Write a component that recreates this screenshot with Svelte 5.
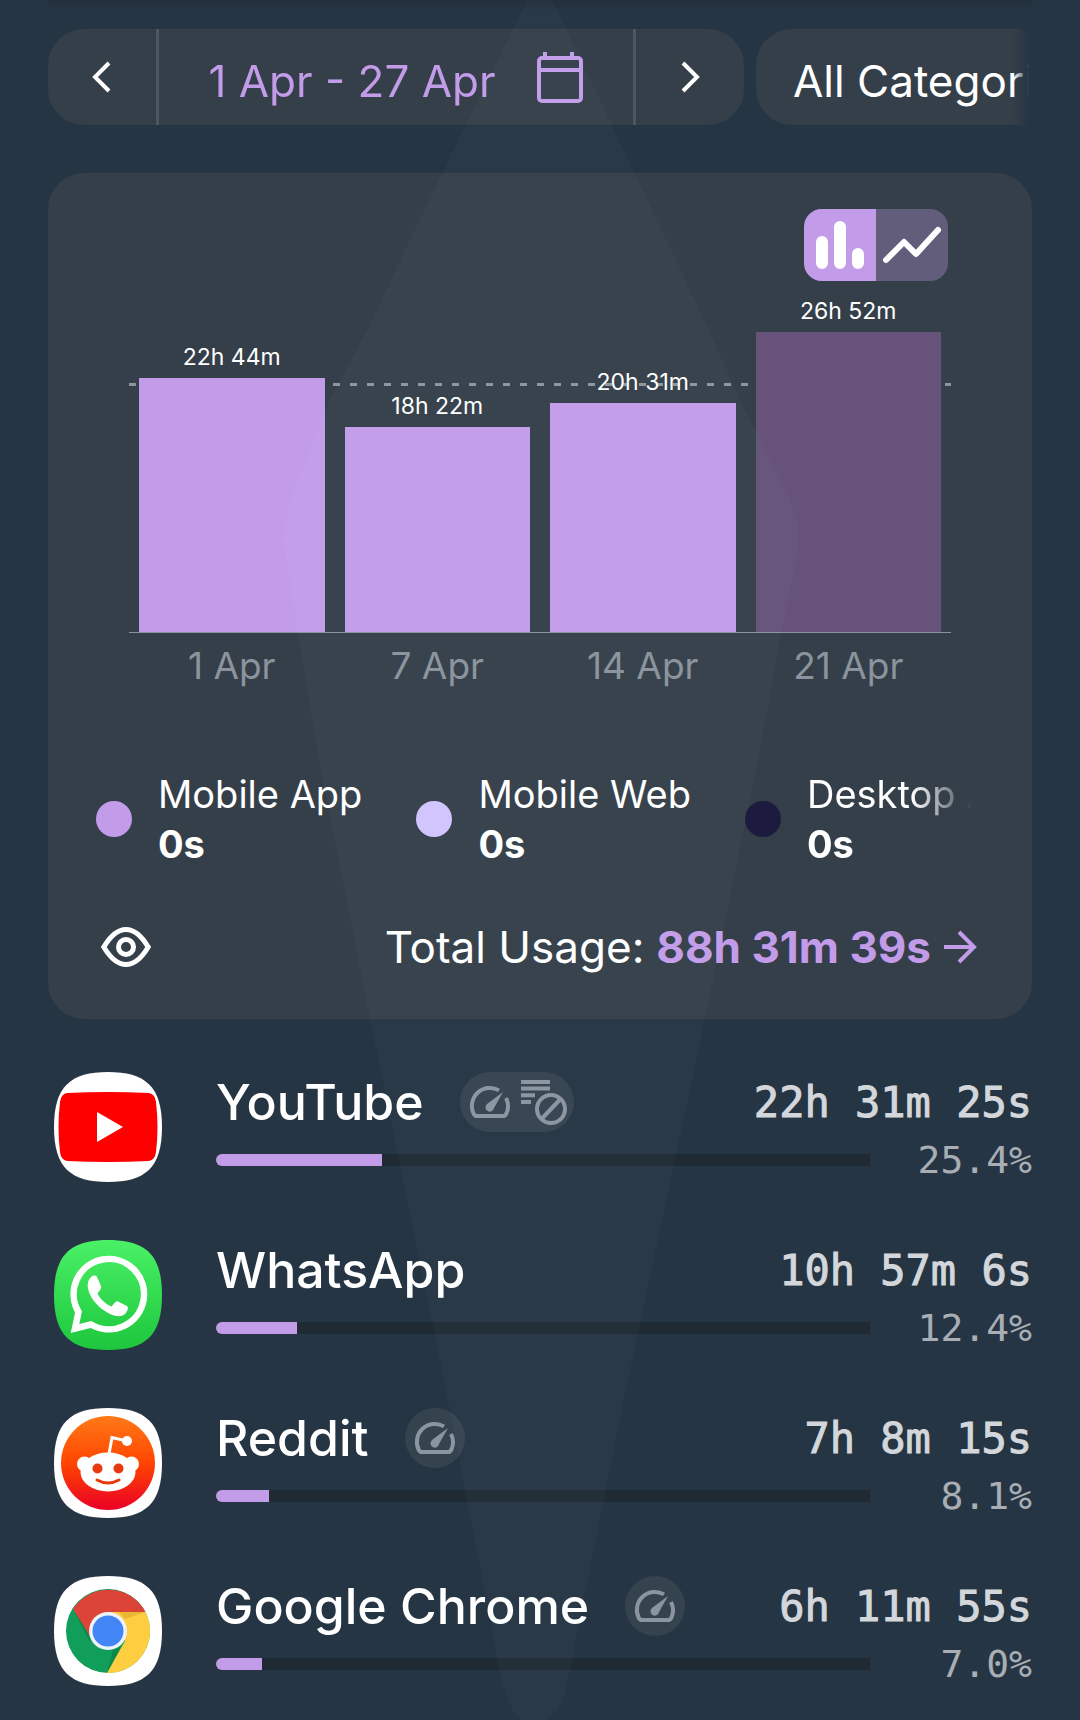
<script>
  const days = [
    { label: '1 Apr', text: '22h 44m', minutes: 1364 },
    { label: '7 Apr', text: '18h 22m', minutes: 1102 },
    { label: '14 Apr', text: '20h 31m', minutes: 1231 },
    { label: '21 Apr', text: '26h 52m', minutes: 1612, current: true }
  ];
  const peak = Math.max(...days.map((d) => d.minutes));
  const average = days.reduce((sum, d) => sum + d.minutes, 0) / days.length;

  const sources = [
    { name: 'Mobile App', value: '0s', tone: 'app' },
    { name: 'Mobile Web', value: '0s', tone: 'web' },
    { name: 'Desktop App', value: '0s', tone: 'desktop' }
  ];

  const apps = [
    { id: 'youtube', name: 'YouTube', time: '22h 31m 25s', percent: '25.4', limit: true, blocked: true },
    { id: 'whatsapp', name: 'WhatsApp', time: '10h 57m 6s', percent: '12.4' },
    { id: 'reddit', name: 'Reddit', time: '7h 8m 15s', percent: '8.1', limit: true },
    { id: 'chrome', name: 'Google Chrome', time: '6h 11m 55s', percent: '7.0', limit: true }
  ];

  let mode = $state('bars');
</script>

{#snippet squircle(fill)}
  <path {fill} d="M55 0C92 0 109 14 109 55S92 110 55 110 1 96 1 55 18 0 55 0Z" />
{/snippet}

<main class="page">
  <div class="top-shade"></div>
  <svg class="kite" viewBox="0 0 1080 1720" preserveAspectRatio="none" aria-hidden="true">
    <path d="M527 0H552L638 180 709 330 740 400 790 500Q803 530 796 560L780 640 760 750 705 1019 628 1380 566 1690Q556 1718 545 1720H522Q510 1712 502 1683L444 1380 370 1019 317 750 299 640 286 560Q281 530 290 500L330 400 367 330 439 180Z" />
  </svg>

  <nav class="filters" aria-label="Filters">
    <div class="range">
      <button class="step" aria-label="Previous period">
        <svg width="20" height="32" viewBox="0 0 20 32"><path d="M17 2 3 16l14 14" /></svg>
      </button>
      <button class="dates">
        <span class="pill-text">1 Apr - 27 Apr</span>
        <svg width="48" height="52" viewBox="0 0 48 52" aria-hidden="true">
          <rect x="3" y="7" width="42" height="43" rx="3" />
          <path d="M3 19h42M9 1v6M36 1v6" />
        </svg>
      </button>
      <button class="step" aria-label="Next period">
        <svg width="20" height="32" viewBox="0 0 20 32"><path d="m3 2 14 14L3 30" /></svg>
      </button>
    </div>
    <button class="category"><span class="pill-text">All Categories</span></button>
  </nav>

  <section class="card">
    <div class="toggle">
      <button class:on={mode === 'bars'} aria-label="Bar chart" onclick={() => (mode = 'bars')}>
        <svg width="72" height="72" viewBox="0 0 72 72"><path stroke-width="12" d="M18 33v21M36 18v36M54 45v9" /></svg>
      </button>
      <button class:on={mode === 'line'} aria-label="Line chart" onclick={() => (mode = 'line')}>
        <svg width="72" height="72" viewBox="0 0 72 72"><path stroke-width="6" stroke-linejoin="round" d="M10 51 28 33 40 45 62 21" /></svg>
      </button>
    </div>

    <div class="chart">
      <div class="plot">
        <div class="average" style:bottom="{(average / peak) * 100}%"></div>
        {#each days as day}
          <div class="column">
            <span class="amount">{day.text}</span>
            <div class="bar" class:current={day.current} style:height="{(day.minutes / peak) * 100}%"></div>
          </div>
        {/each}
      </div>
      <div class="axis">
        {#each days as day}<span>{day.label}</span>{/each}
      </div>
    </div>

    <ul class="legend">
      {#each sources as source}
        <li>
          <span class="dot {source.tone}"></span>
          <div>
            <div class="source">{source.name}</div>
            <strong>{source.value}</strong>
          </div>
        </li>
      {/each}
    </ul>

    <footer>
      <button class="eye" aria-label="Show or hide usage">
        <svg width="50" height="40" viewBox="0 0 50 40">
          <path d="M2.8 20C10 8 17 2.5 25 2.5S40 8 47.2 20C40 32 33 37.5 25 37.5S10 32 2.8 20Z" />
          <circle cx="25" cy="20" r="7.5" />
        </svg>
      </button>
      <a class="total" href="#total">
        <span>Total Usage:</span>
        <strong>88h 31m 39s</strong>
        <svg width="34" height="34" viewBox="0 0 34 34" aria-hidden="true"><path d="M1 17h30M16 2l15 15-15 15" /></svg>
      </a>
    </footer>
  </section>

  <ul class="apps">
    {#each apps as app}
      <li>
        <svg class="logo" width="110" height="110" viewBox="0 0 110 110" aria-hidden="true">
          {#if app.id === 'youtube'}
            {@render squircle('#fff')}
            <path fill="#f00" d="M14 21Q55 19 96 21 102 22 103 30 106 55 103 80 102 88 96 89 55 91 14 89 8 88 7 80 4 55 7 30 8 22 14 21Z" />
            <path fill="#fff" d="M44 40 70 55 44 70Z" />
          {:else if app.id === 'whatsapp'}
            <defs>
              <linearGradient id="wa" x2="0" y2="1"><stop stop-color="#4af167" /><stop offset="1" stop-color="#1dc63c" /></linearGradient>
            </defs>
            {@render squircle('url(#wa)')}
            <path fill="none" stroke="#fff" stroke-width="6.500" d="M22 88.500 25.500 72A35.200 35.200 0 1 1 38 84.500Z" />
            <path fill="#fff" d="M38 37c2-2 5-2 6 0l4 9c1 2-1 4-3.500 7.500 3 6 8 10.500 14 13 3-3.500 4.500-6 6.500-5l9 4.500c2 2 0 6-2 8-4 3-9 3-16-.5C46 68 38 60 35 49c-1-5 0-9 3-12Z" />
          {:else if app.id === 'reddit'}
            <defs>
              <linearGradient id="rd" x2="0" y2="1"><stop stop-color="#ff7a18" /><stop offset=".5" stop-color="#ff4500" /><stop offset="1" stop-color="#ea0027" /></linearGradient>
            </defs>
            {@render squircle('#fff')}
            <circle cx="55" cy="55" r="47" fill="url(#rd)" />
            <path fill="none" stroke="#fff" stroke-width="3" d="M56 46 59 29.500 74 33" />
            <circle cx="74" cy="33" r="5" fill="#fff" />
            <circle cx="31.500" cy="56" r="7.500" fill="#fff" />
            <circle cx="78.500" cy="56" r="7.500" fill="#fff" />
            <ellipse cx="55" cy="64" rx="27.500" ry="19.500" fill="#fff" />
            <circle cx="44.500" cy="60.500" r="5" fill="#e8380d" />
            <circle cx="65.500" cy="60.500" r="5" fill="#e8380d" />
            <path fill="none" stroke="#e8380d" stroke-width="3" stroke-linecap="round" d="M44 72q11 6 22 0" />
          {:else}
            {@render squircle('#fff')}
            <circle cx="55" cy="55" r="42" fill="#119e5a" />
            <path fill="#ffcd40" d="M55 36H92.500A42 42 0 0 1 54 97L72 65Z" />
            <path fill="#db4437" d="M20 33A42 42 0 0 1 92.500 36H55L38 62Z" />
            <path fill="#e0a62f" opacity=".6" d="M66 36H92L72 43Z" />
            <path fill="#0b7a45" opacity=".6" d="M20 33 38 62 36 65ZM68 70 54 97 60 74Z" />
            <circle cx="55" cy="55" r="19" fill="#eef2fb" />
            <circle cx="55" cy="55" r="15.500" fill="#4285f4" />
          {/if}
        </svg>

        <div class="details">
          <div class="line">
            <span class="name">{app.name}</span>
            {#if app.limit}
              <span class="badge">
                <svg width="60" height="60" viewBox="0 0 60 60" role="img" aria-label="Usage limit">
                  <path class="stroke" d="M39 18.400A18 18 0 0 0 13.800 42Q14.800 44 17 44H43Q45.200 44 46.200 42A18 18 0 0 0 46 26" />
                  <path class="solid" d="M43 20 34 36A4.300 4.300 0 1 1 27 32Z" />
                </svg>
                {#if app.blocked}
                  <svg class="block" width="54" height="60" viewBox="60 0 54 60" role="img" aria-label="Content blocked">
                    <path class="stroke" d="M61 10h29M61 16.500h29M61 23.300h14M61 30h10" />
                    <circle class="stroke" cx="91" cy="37" r="14" />
                    <path class="stroke" d="M81.500 47 100.500 27" />
                  </svg>
                {/if}
              </span>
            {/if}
            <span class="time">{app.time}</span>
          </div>
          <div class="line share">
            <div class="track" role="progressbar" aria-label={app.name} aria-valuenow={app.percent}>
              <div class="fill" style:width="{app.percent}%"></div>
            </div>
            <span class="percent">{app.percent}%</span>
          </div>
        </div>
      </li>
    {/each}
  </ul>
</main>

<style>
  :global(body) {
    background: #263544;
  }
  .page {
    position: relative;
    box-sizing: border-box;
    min-height: 100vh;
    padding: 29px 48px 34px;
    overflow: hidden;
    background: #263544;
    color: #fff;
    font-family: Inter, 'Open Sans', sans-serif;
  }
  .top-shade {
    position: absolute;
    inset: 0 48px auto;
    height: 12px;
    background: linear-gradient(rgb(0 0 0 / 0.12), transparent);
  }
  .kite {
    position: absolute;
    inset: 0;
    width: 100%;
    height: 100%;
    fill: rgb(210 240 255 / 0.024);
    pointer-events: none;
    z-index: 1;
  }
  button {
    padding: 0;
    border: 0;
    background: none;
    color: inherit;
    font: inherit;
    cursor: pointer;
  }
  ul {
    margin: 0;
    padding: 0;
    list-style: none;
  }
  svg {
    display: block;
    flex: none;
  }

  .filters {
    display: flex;
    gap: 12px;
    height: 96px;
    margin-right: 3px;
    overflow: hidden;
    font-size: 44px;
    white-space: nowrap;
    mask-image: linear-gradient(to left, transparent, #000 16px);
  }
  .range,
  .category {
    display: flex;
    flex: none;
    border-radius: 36px;
    background: #353f4a;
  }
  .step {
    display: grid;
    place-items: center;
    width: 108px;
  }
  .step svg {
    fill: none;
    stroke: #fff;
    stroke-width: 4;
  }
  .dates {
    display: flex;
    align-items: center;
    justify-content: center;
    gap: 40px;
    min-width: 480px;
    border: solid #4d5762;
    border-width: 0 3px;
    color: #c39ce9;
  }
  .dates svg {
    fill: none;
    stroke: #c39ce9;
    stroke-width: 4;
  }
  .pill-text {
    padding-top: 8px;
  }
  .category {
    align-items: center;
    padding: 0 37px;
  }

  .card {
    display: flex;
    flex-direction: column;
    margin-top: 48px;
    padding: 36px 48px 48px;
    border-radius: 36px;
    background: #353f4a;
  }
  .toggle {
    display: flex;
    align-self: flex-end;
    margin-right: 36px;
    border-radius: 18px;
    background: #615d7b;
    overflow: hidden;
  }
  .toggle .on {
    background: #c39ce9;
  }
  .toggle path {
    fill: none;
    stroke: #fff;
    stroke-linecap: round;
  }

  .chart {
    margin: 51px 33px 0;
  }
  .plot {
    position: relative;
    display: flex;
    height: 300px;
    border-bottom: 1px solid #8b9299;
  }
  .average {
    position: absolute;
    left: 0;
    right: 0;
    height: 3px;
    margin-bottom: -1px;
    background: repeating-linear-gradient(90deg, #8d959c 0 7px, transparent 7px 17px);
  }
  .column {
    position: relative;
    display: flex;
    flex: 1;
    flex-direction: column;
    align-items: center;
    justify-content: flex-end;
    padding: 0 10px;
  }
  .amount {
    flex: none;
    margin-bottom: 8px;
    font-size: 23px;
    line-height: 26px;
  }
  .bar {
    flex: none;
    width: 100%;
    background: #c39ce9;
  }
  .bar.current {
    background: #67527a;
  }
  .axis {
    display: flex;
    margin-top: 10px;
    color: #8b939c;
    font-size: 37px;
    line-height: 46px;
  }
  .axis span {
    flex: 1;
    text-align: center;
  }

  .legend {
    display: flex;
    gap: 54px;
    margin: 80px 12px 0 0;
    overflow: hidden;
    white-space: nowrap;
  }
  .legend li {
    display: flex;
    flex: none;
    align-items: center;
    gap: 26px;
    font-size: 38px;
    line-height: 50px;
  }
  .legend li:last-child {
    flex: 1;
    min-width: 0;
  }
  .legend li:last-child > div {
    min-width: 0;
    overflow: hidden;
    mask-image: linear-gradient(to left, transparent, #000 60px);
  }
  .dot {
    flex: none;
    width: 36px;
    height: 36px;
    border-radius: 50%;
  }
  .app {
    background: #c39ce9;
  }
  .web {
    background: #d2c3fd;
  }
  .desktop {
    background: #1c1a3f;
  }

  footer {
    display: flex;
    align-items: center;
    justify-content: space-between;
    height: 48px;
    margin: 54px 7px 0 5px;
    font-size: 44px;
  }
  .eye svg {
    fill: none;
    stroke: #fff;
    stroke-width: 5;
  }
  .total {
    display: flex;
    align-items: center;
    gap: 12px;
    color: inherit;
    text-decoration: none;
    white-space: nowrap;
  }
  .total strong {
    color: #c39ce9;
  }
  .total svg {
    fill: none;
    stroke: #c39ce9;
    stroke-width: 4;
  }

  .apps {
    display: grid;
    gap: 58px;
    margin-top: 53px;
    padding-left: 5px;
  }
  .apps li {
    display: flex;
    gap: 53px;
  }
  .details {
    display: grid;
    flex: 1;
    grid-template-rows: 60px 44px;
    gap: 6px;
    min-width: 0;
    white-space: nowrap;
  }
  .line {
    display: flex;
    align-items: center;
  }
  .name {
    font-size: 50px;
    font-weight: 500;
  }
  .badge {
    display: flex;
    margin-left: 36px;
    border-radius: 30px;
    background: #35434f;
  }
  .stroke {
    fill: none;
    stroke: #8b959f;
    stroke-width: 4;
  }
  .solid {
    fill: #8b959f;
  }
  .time,
  .percent {
    font-family: 'DejaVu Sans Mono', monospace;
  }
  .time {
    margin-left: auto;
    color: #d3d7db;
    font-size: 42px;
    -webkit-text-stroke: 1px #d3d7db;
  }
  .percent {
    width: 162px;
    color: #a8aeb4;
    font-size: 38px;
    text-align: right;
  }
  .track {
    flex: 1;
    height: 12px;
    border-radius: 6px 0 0 6px;
    background: #1f2a35;
    overflow: hidden;
  }
  .fill {
    height: 100%;
    background: #c39ce9;
  }
</style>
